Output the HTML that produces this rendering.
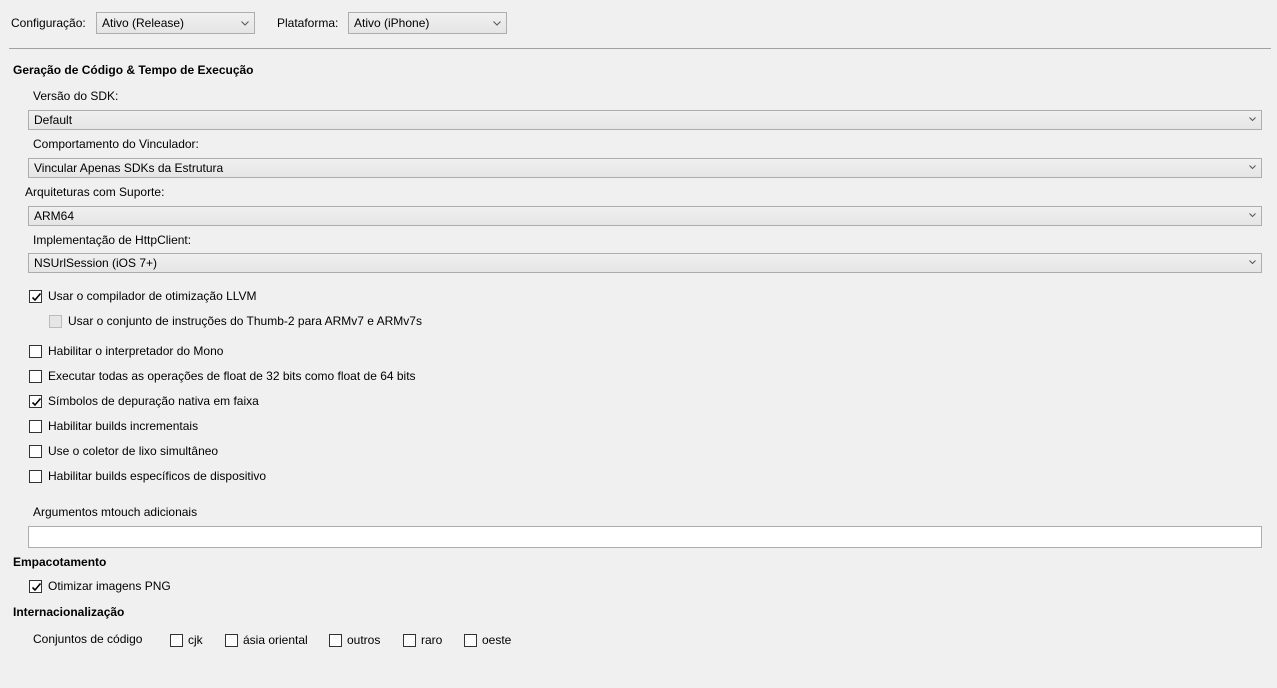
<!DOCTYPE html>
<html><head><meta charset="utf-8"><style>
body{margin:0;width:1277px;height:688px;background:#f0f0f0;font-family:"Liberation Sans",sans-serif;font-size:12px;color:#000;position:relative;overflow:hidden}
.t{position:absolute;white-space:nowrap;line-height:14px}
.b{font-weight:bold}
.sel{position:absolute;box-sizing:border-box;border:1px solid #adadad;background:linear-gradient(#f0f0f0,#e5e5e5);height:20px}
.sel span{position:absolute;left:5px;top:2px;line-height:14px}
.sel svg{position:absolute;right:5px;top:6px}
.cb{position:absolute;box-sizing:border-box;width:13px;height:13px;border:1px solid #333;background:#fff}
.cb.dis{border-color:#bcbcbc;background:#e6e6e6}
.cb svg{position:absolute;left:1px;top:1px}
</style></head><body>
<div class="t" style="left:11px;top:16px">Configuração:</div>
<div class="sel" style="left:96px;top:12px;width:159px;height:22px"><span style="top:3px">Ativo (Release)</span><svg width="8" height="5" style="top:8px"><path d="M0.5 0.5L4 4L7.5 0.5" fill="none" stroke="#555"/></svg></div>
<div class="t" style="left:277px;top:16px">Plataforma:</div>
<div class="sel" style="left:348px;top:12px;width:159px;height:22px"><span style="top:3px">Ativo (iPhone)</span><svg width="8" height="5" style="top:8px"><path d="M0.5 0.5L4 4L7.5 0.5" fill="none" stroke="#555"/></svg></div>
<div style="position:absolute;left:9px;top:48px;width:1262px;height:1px;background:#a0a0a0"></div>
<div class="t b" style="left:13px;top:63px">Geração de Código &amp; Tempo de Execução</div>

<div class="t" style="left:33px;top:89px">Versão do SDK:</div>
<div class="sel" style="left:28px;top:110px;width:1234px"><span>Default</span><svg width="7" height="5"><path d="M0.5 0.5L3.5 3.5L6.5 0.5" fill="none" stroke="#555"/></svg></div>
<div class="t" style="left:33px;top:137px">Comportamento do Vinculador:</div>
<div class="sel" style="left:28px;top:158px;width:1234px"><span>Vincular Apenas SDKs da Estrutura</span><svg width="7" height="5"><path d="M0.5 0.5L3.5 3.5L6.5 0.5" fill="none" stroke="#555"/></svg></div>
<div class="t" style="left:25px;top:185px">Arquiteturas com Suporte:</div>
<div class="sel" style="left:28px;top:206px;width:1234px"><span>ARM64</span><svg width="7" height="5"><path d="M0.5 0.5L3.5 3.5L6.5 0.5" fill="none" stroke="#555"/></svg></div>
<div class="t" style="left:33px;top:233px">Implementação de HttpClient:</div>
<div class="sel" style="left:28px;top:253px;width:1234px"><span>NSUrlSession (iOS 7+)</span><svg width="7" height="5"><path d="M0.5 0.5L3.5 3.5L6.5 0.5" fill="none" stroke="#555"/></svg></div>

<div class="cb" style="left:29px;top:290px"><svg width="11" height="11"><path d="M1.5 5.5L4 8L9.5 1.5" fill="none" stroke="#000" stroke-width="1.6"/></svg></div>
<div class="t" style="left:48px;top:289px">Usar o compilador de otimização LLVM</div>
<div class="cb dis" style="left:49px;top:315px"></div>
<div class="t" style="left:68px;top:314px">Usar o conjunto de instruções do Thumb-2 para ARMv7 e ARMv7s</div>

<div class="cb" style="left:29px;top:345px"></div>
<div class="t" style="left:48px;top:344px">Habilitar o interpretador do Mono</div>
<div class="cb" style="left:29px;top:370px"></div>
<div class="t" style="left:48px;top:369px">Executar todas as operações de float de 32 bits como float de 64 bits</div>
<div class="cb" style="left:29px;top:395px"><svg width="11" height="11"><path d="M1.5 5.5L4 8L9.5 1.5" fill="none" stroke="#000" stroke-width="1.6"/></svg></div>
<div class="t" style="left:48px;top:394px">Símbolos de depuração nativa em faixa</div>
<div class="cb" style="left:29px;top:420px"></div>
<div class="t" style="left:48px;top:419px">Habilitar builds incrementais</div>
<div class="cb" style="left:29px;top:445px"></div>
<div class="t" style="left:48px;top:444px">Use o coletor de lixo simultâneo</div>
<div class="cb" style="left:29px;top:470px"></div>
<div class="t" style="left:48px;top:469px">Habilitar builds específicos de dispositivo</div>

<div class="t" style="left:33px;top:505px">Argumentos mtouch adicionais</div>
<div style="position:absolute;left:28px;top:526px;width:1234px;height:22px;box-sizing:border-box;border:1px solid #adadad;background:#fff"></div>

<div class="t b" style="left:13px;top:555px">Empacotamento</div>
<div class="cb" style="left:29px;top:580px"><svg width="11" height="11"><path d="M1.5 5.5L4 8L9.5 1.5" fill="none" stroke="#000" stroke-width="1.6"/></svg></div>
<div class="t" style="left:48px;top:579px">Otimizar imagens PNG</div>
<div class="t b" style="left:13px;top:605px">Internacionalização</div>
<div class="t" style="left:33px;top:632px">Conjuntos de código</div>
<div class="cb" style="left:170px;top:634px"></div><div class="t" style="left:188px;top:633px">cjk</div>
<div class="cb" style="left:225px;top:634px"></div><div class="t" style="left:243px;top:633px">ásia oriental</div>
<div class="cb" style="left:329px;top:634px"></div><div class="t" style="left:347px;top:633px">outros</div>
<div class="cb" style="left:403px;top:634px"></div><div class="t" style="left:421px;top:633px">raro</div>
<div class="cb" style="left:464px;top:634px"></div><div class="t" style="left:482px;top:633px">oeste</div>
</body></html>
